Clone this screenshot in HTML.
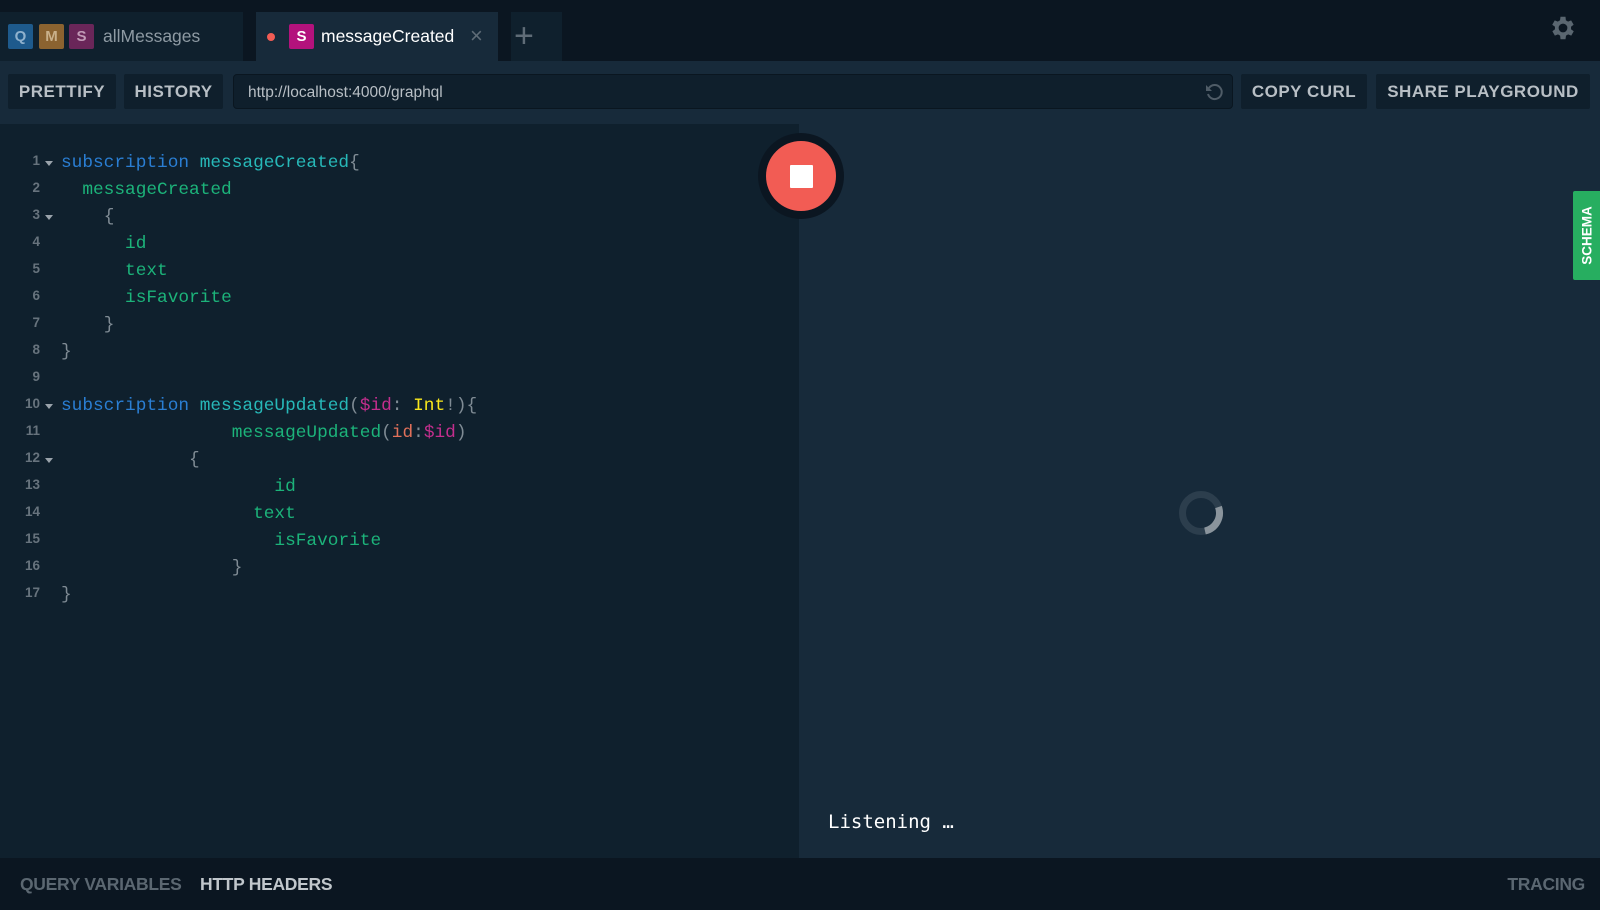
<!DOCTYPE html>
<html><head><meta charset="utf-8"><style>
*{box-sizing:border-box;margin:0;padding:0}
body{width:1600px;height:910px;background:#172a3a;font-family:"Liberation Sans",sans-serif;position:relative;overflow:hidden}
.abs{position:absolute}
.top{left:0;top:0;width:1600px;height:61px;background:#0b1621}
.tab{top:12px;height:49px;background:#0f202d}
.badge{top:24px;width:25px;height:25px;border-radius:2px;color:#fff;font-weight:bold;font-size:15px;text-align:center;line-height:25px}
.btn{top:74px;height:35px;background:#0f1f2c;border-radius:2px;color:#b8bfc5;font-weight:bold;font-size:17px;line-height:35px;text-align:center;letter-spacing:0.5px}
.code{font-family:"Liberation Mono",monospace;font-size:17.8px;white-space:pre;line-height:27px}
.ln{position:absolute;left:0;top:-3px;width:40px;text-align:right;font-family:"Liberation Sans",sans-serif;font-size:13.5px;color:#67737d;font-weight:bold}
.ar{position:absolute;left:45px;width:0;height:0;border-left:4.5px solid transparent;border-right:4.5px solid transparent;border-top:5px solid #9aa3ab;margin-top:11px}
.l{position:absolute;left:61px}
.k{color:#2a7ed3}.d{color:#27b8b8}.f{color:#1cb37a}.p{color:#7f8b94}.v{color:#c32e8d}.t{color:#f8e71c}.a{color:#e0705a}
.bt{top:874px;font-weight:bold;font-size:17.5px;letter-spacing:-0.3px}
</style></head><body>
<div class="abs top"></div>
<div class="abs tab" style="left:0;width:243px"></div>
<div class="abs tab" style="left:256px;width:242px;background:#172a3a"></div>
<div class="abs tab" style="left:511px;width:51px"></div>
<div class="abs" style="left:514px;top:21px;color:#5f6c77;font-size:34px;line-height:30px;font-weight:300">+</div>
<div class="abs badge" style="left:8px;background:#1e5a8c;color:#8fb1cd">Q</div>
<div class="abs badge" style="left:39px;background:#8b6330;color:#c9b08a">M</div>
<div class="abs badge" style="left:69px;background:#6a2659;color:#c29ab7">S</div>
<div class="abs" style="left:103px;top:26px;color:#8e9aa3;font-size:17.5px">allMessages</div>
<div class="abs" style="left:267px;top:33px;width:8px;height:8px;border-radius:50%;background:#f25c54"></div>
<div class="abs badge" style="left:289px;background:#b3127c">S</div>
<div class="abs" style="left:321px;top:26px;color:#fff;font-size:17.5px">messageCreated</div>
<div class="abs" style="left:470px;top:23px;color:#5f6c77;font-size:22px">×</div>
<svg class="abs" style="left:1548px;top:13px" width="30" height="30" viewBox="0 0 24 24"><path fill="#5a6670" d="M19.4 13a7.5 7.5 0 000-2l2.1-1.6-2-3.5-2.5 1a7.3 7.3 0 00-1.7-1L15 3h-4l-.4 2.9a7.3 7.3 0 00-1.7 1l-2.5-1-2 3.5L6.6 11a7.5 7.5 0 000 2l-2.1 1.6 2 3.5 2.5-1c.5.4 1.1.7 1.7 1L11 21h4l.4-2.9c.6-.3 1.2-.6 1.7-1l2.5 1 2-3.5zM13 15.5a3.5 3.5 0 110-7 3.5 3.5 0 010 7z" transform="translate(-1 0)"/></svg>
<div class="abs btn" style="left:8px;width:108px">PRETTIFY</div>
<div class="abs btn" style="left:124px;width:99px">HISTORY</div>
<div class="abs" style="left:233px;top:74px;width:1000px;height:35px;background:#0f1f2c;border:1px solid #0a1620;border-radius:4px;color:#b8bfc5;font-size:15.5px;line-height:35px;padding-left:14px">http://localhost:4000/graphql</div>
<svg class="abs" style="left:1204px;top:82px" width="20" height="20" viewBox="0 0 20 20"><path d="M5 6a7 7 0 1 1-1 6" fill="none" stroke="#4f5c67" stroke-width="2"/><path d="M2 3v6h6z" fill="#4f5c67"/></svg>
<div class="abs btn" style="left:1241px;width:126px">COPY CURL</div>
<div class="abs btn" style="left:1376px;width:214px">SHARE PLAYGROUND</div>
<div class="abs" style="left:0;top:124px;width:799px;height:734px;background:#0f202d"></div>
<div class="abs code" style="left:0;top:150px;width:799px;height:500px">
<div style="position:absolute;top:0;width:100%"><span class="ln">1</span><span class="ar"></span><span class="l"><span class="k">subscription</span> <span class="d">messageCreated</span><span class="p">{</span></span></div>
<div style="position:absolute;top:27px;width:100%"><span class="ln">2</span><span class="l">  <span class="f">messageCreated</span></span></div>
<div style="position:absolute;top:54px;width:100%"><span class="ln">3</span><span class="ar"></span><span class="l">    <span class="p">{</span></span></div>
<div style="position:absolute;top:81px;width:100%"><span class="ln">4</span><span class="l">      <span class="f">id</span></span></div>
<div style="position:absolute;top:108px;width:100%"><span class="ln">5</span><span class="l">      <span class="f">text</span></span></div>
<div style="position:absolute;top:135px;width:100%"><span class="ln">6</span><span class="l">      <span class="f">isFavorite</span></span></div>
<div style="position:absolute;top:162px;width:100%"><span class="ln">7</span><span class="l">    <span class="p">}</span></span></div>
<div style="position:absolute;top:189px;width:100%"><span class="ln">8</span><span class="l"><span class="p">}</span></span></div>
<div style="position:absolute;top:216px;width:100%"><span class="ln">9</span></div>
<div style="position:absolute;top:243px;width:100%"><span class="ln">10</span><span class="ar"></span><span class="l"><span class="k">subscription</span> <span class="d">messageUpdated</span><span class="p">(</span><span class="v">$id</span><span class="p">: </span><span class="t">Int</span><span class="p">!){</span></span></div>
<div style="position:absolute;top:270px;width:100%"><span class="ln">11</span><span class="l">                <span class="f">messageUpdated</span><span class="p">(</span><span class="a">id</span><span class="p">:</span><span class="v">$id</span><span class="p">)</span></span></div>
<div style="position:absolute;top:297px;width:100%"><span class="ln">12</span><span class="ar"></span><span class="l">            <span class="p">{</span></span></div>
<div style="position:absolute;top:324px;width:100%"><span class="ln">13</span><span class="l">                    <span class="f">id</span></span></div>
<div style="position:absolute;top:351px;width:100%"><span class="ln">14</span><span class="l">                  <span class="f">text</span></span></div>
<div style="position:absolute;top:378px;width:100%"><span class="ln">15</span><span class="l">                    <span class="f">isFavorite</span></span></div>
<div style="position:absolute;top:405px;width:100%"><span class="ln">16</span><span class="l">                <span class="p">}</span></span></div>
<div style="position:absolute;top:432px;width:100%"><span class="ln">17</span><span class="l"><span class="p">}</span></span></div>
</div>
<div class="abs" style="left:758px;top:133px;width:86px;height:86px;border-radius:50%;background:#0b1621"></div>
<div class="abs" style="left:766px;top:141px;width:70px;height:70px;border-radius:50%;background:#f25c54"></div>
<div class="abs" style="left:790px;top:165px;width:23px;height:23px;background:#fff;border-radius:1px"></div>
<svg class="abs" style="left:1178px;top:490px" width="46" height="46" viewBox="0 0 46 46"><circle cx="23" cy="23" r="18.5" fill="none" stroke="#2c3e4d" stroke-width="7"/><path d="M40.5 17 A18.5 18.5 0 0 1 27 41" fill="none" stroke="#8a949c" stroke-width="7"/></svg>
<div class="abs" style="left:828px;top:811px;color:#fff;font-family:'DejaVu Sans Mono','Liberation Mono',monospace;font-size:19px">Listening …</div>
<div class="abs" style="left:1573px;top:191px;width:27px;height:89px;background:#27ae60;border-radius:2px 0 0 2px"></div>
<div class="abs" style="left:1544px;top:227px;width:86px;height:17px;transform:rotate(-90deg);color:#fff;font-weight:bold;font-size:13.5px;text-align:center;line-height:17px">SCHEMA</div>
<div class="abs" style="left:0;top:858px;width:1600px;height:52px;background:#0b1621"></div>
<div class="abs bt" style="left:20px;color:#5b6771">QUERY VARIABLES</div>
<div class="abs bt" style="left:200px;color:#c1c7cc">HTTP HEADERS</div>
<div class="abs bt" style="right:15px;color:#5b6771">TRACING</div>
</body></html>
